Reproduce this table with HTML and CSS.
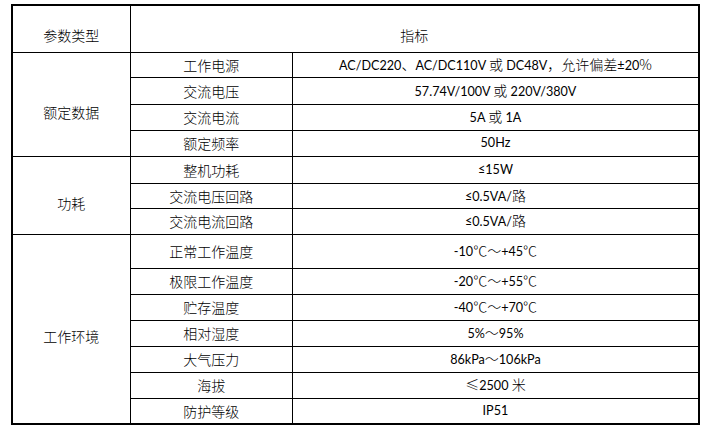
FILE: index.html
```html
<!DOCTYPE html>
<html lang="zh">
<head>
<meta charset="utf-8">
<link rel="stylesheet" href="styles.css">
</head>
<body>
<table class="spec">
  <colgroup>
    <col class="c1"><col class="c2"><col class="c3">
  </colgroup>
  <tr class="head"><td class="group">参数类型</td><td colspan="2" class="group">指标</td></tr>
  <tr class="h25"><td rowspan="4" class="group">额定数据</td><td class="name">工作电源</td><td class="val">AC/DC220<span class="cjk">、</span>AC/DC110V <span class="cjk">或</span> DC48V<span class="cjk">，允许偏差</span>±20<span class="cjk">%</span></td></tr>
  <tr class="h27"><td class="name">交流电压</td><td class="val">57.74V/100V <span class="cjk">或</span> 220V/380V</td></tr>
  <tr class="h26"><td class="name">交流电流</td><td class="val">5A <span class="cjk">或</span> 1A</td></tr>
  <tr class="h26"><td class="name">额定频率</td><td class="val">50Hz</td></tr>
  <tr class="h27"><td rowspan="3" class="group">功耗</td><td class="name">整机功耗</td><td class="val">≤15W</td></tr>
  <tr class="h25"><td class="name">交流电压回路</td><td class="val">≤0.5VA/<span class="cjk">路</span></td></tr>
  <tr class="h26"><td class="name">交流电流回路</td><td class="val">≤0.5VA/<span class="cjk">路</span></td></tr>
  <tr class="h34"><td rowspan="7" class="group">工作环境</td><td class="name">正常工作温度</td><td class="val">-10<span class="cjk">℃～</span>+45<span class="cjk">℃</span></td></tr>
  <tr class="h26"><td class="name">极限工作温度</td><td class="val">-20<span class="cjk">℃～</span>+55<span class="cjk">℃</span></td></tr>
  <tr class="h26"><td class="name">贮存温度</td><td class="val">-40<span class="cjk">℃～</span>+70<span class="cjk">℃</span></td></tr>
  <tr class="h26"><td class="name">相对湿度</td><td class="val">5%<span class="cjk">～</span>95%</td></tr>
  <tr class="h26"><td class="name">大气压力</td><td class="val">86kPa<span class="cjk">～</span>106kPa</td></tr>
  <tr class="h26"><td class="name">海拔</td><td class="val"><span class="cjk">≤</span>2500 <span class="cjk">米</span></td></tr>
  <tr class="h26"><td class="name">防护等级</td><td class="val">IP51</td></tr>
</table>
</body>
</html>
```
FILE: styles.css
```css
html, body {
  margin: 0;
  padding: 0;
  background: #fff;
}
body {
  padding: 4px 0 0 11px;
  font-family: "Lato", "Noto Sans CJK SC", sans-serif;
  font-size: 14px;
  color: #000;
}
.spec {
  border-collapse: collapse;
  border: 2px solid #000;
  table-layout: fixed;
  width: 689px;
}
.c1 { width: 118px; }
.c2 { width: 162px; }
.c3 { width: 406px; }
.spec td {
  border: 1px solid #000;
  text-align: center;
  vertical-align: middle;
  padding: 0;
  line-height: 16px;
  white-space: nowrap;
  font-family: "Noto Sans CJK SC", sans-serif;
  font-weight: 300;
}
.spec td.group {
  padding-top: 15px;
}
.spec td.val {
  font-family: "Lato", "Noto Sans CJK SC", sans-serif;
  font-weight: 400;
  font-size: 12.6px;
}
.spec td.val .cjk {
  font-family: "Noto Sans CJK SC", sans-serif;
  font-weight: 300;
  font-size: 14px;
}
.head { height: 47px; }
.head td.group { padding-top: 12px; }
.h25 { height: 25px; }
.h26 { height: 26px; }
.h27 { height: 27px; }
.h34 { height: 34px; }
```
